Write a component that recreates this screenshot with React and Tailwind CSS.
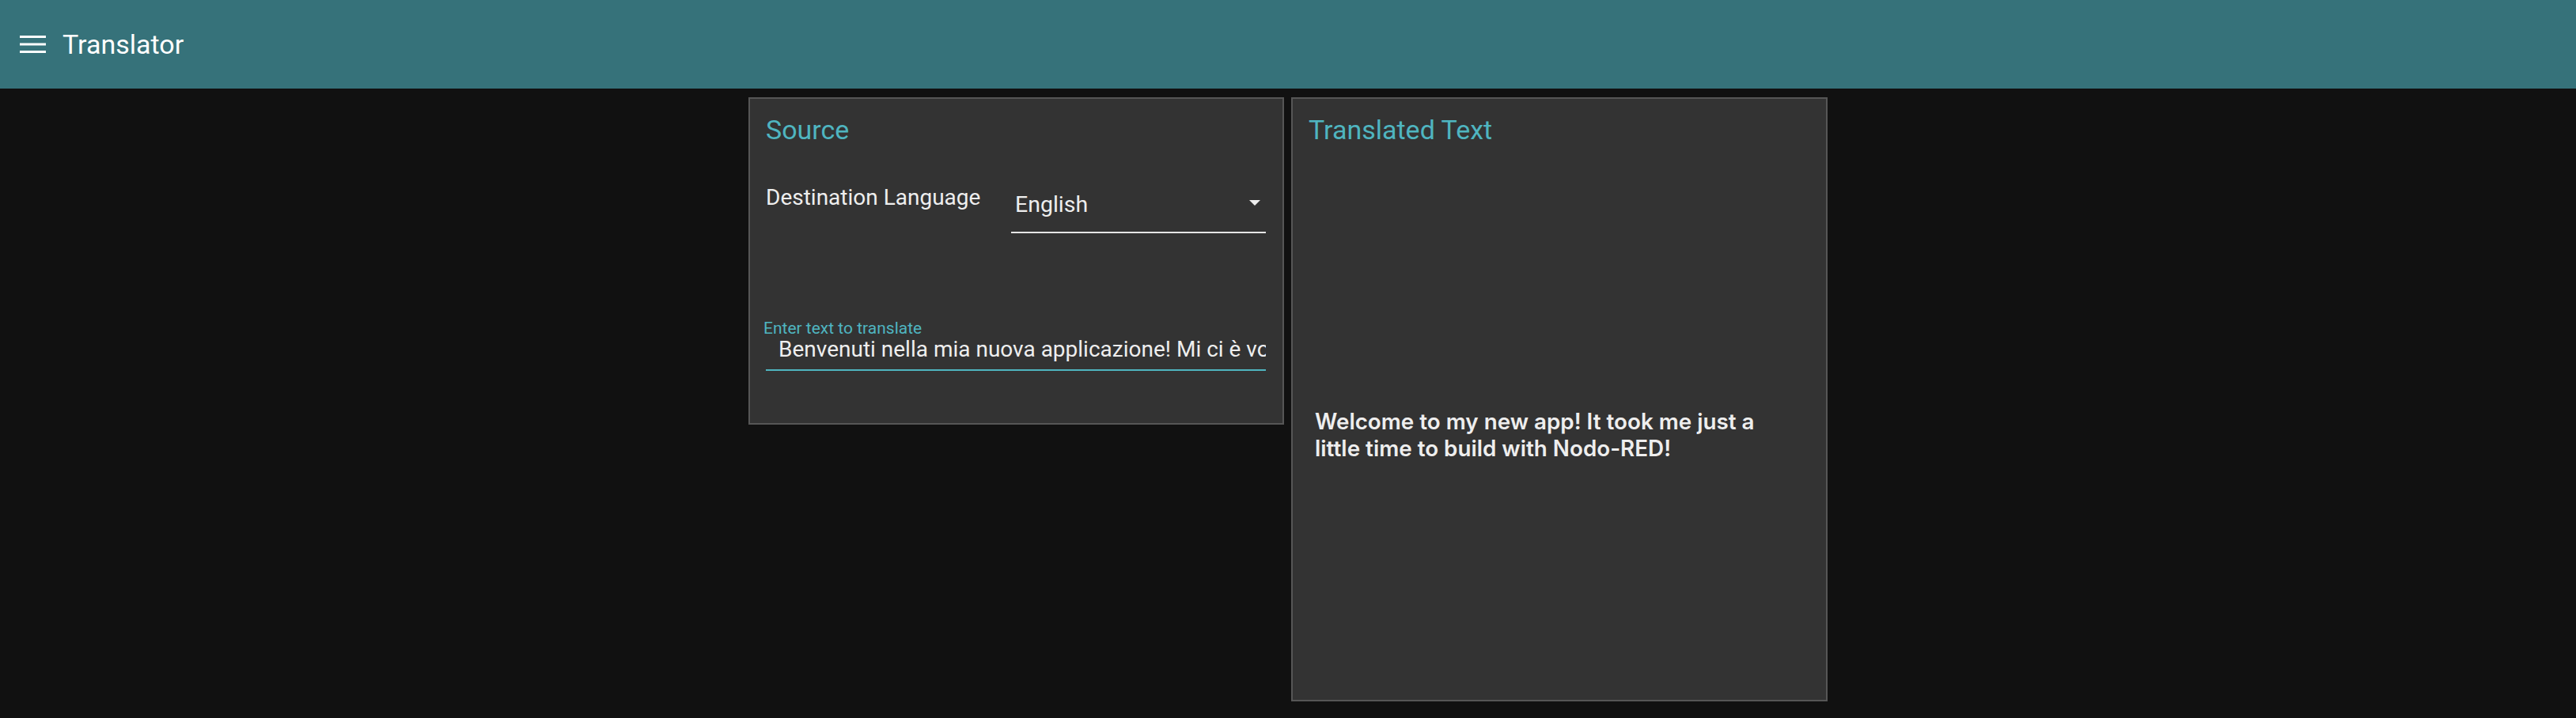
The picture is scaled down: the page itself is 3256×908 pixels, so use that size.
import React from "react";

export default function App() {
  return (
    <div className="min-h-[908px] w-full bg-[#111111]" style={{ fontFamily: "Roboto, 'Liberation Sans', sans-serif" }}>
      <header className="flex h-[112px] items-center bg-[#36727a] pl-[25px]">
        <svg width="33" height="22" viewBox="0 0 33 22" className="mt-[-1px]">
          <rect x="0" y="0" width="33" height="3" fill="#ffffff" />
          <rect x="0" y="9.5" width="33" height="3" fill="#ffffff" />
          <rect x="0" y="19" width="33" height="3" fill="#ffffff" />
        </svg>
        <span className="ml-[21px] text-[34px] leading-[40px] text-white">Translator</span>
      </header>
      <main className="flex items-start justify-center gap-[9px] pt-[11px]">
        <section className="flex h-[414px] w-[677px] flex-col border-2 border-[#565656] bg-[#333333] pl-[20px] pr-[21px] pt-[19px]">
          <h2 className="text-[34px] font-normal leading-[40px] text-[#4fb5c0]">Source</h2>
          <div className="mt-[49px] flex items-start">
            <div className="flex-1 text-[28px] leading-[34px] text-[#eeeeee]">Destination Language</div>
            <div className="mt-[9px] flex w-[322px] items-start justify-between border-b-2 border-[#e6e6e6] pb-[17px] pl-[5px]">
              <span className="text-[28.5px] leading-[34px] text-[#eeeeee]">English</span>
              <svg width="14" height="8" viewBox="0 0 14 8" className="mr-[7px] mt-[11px]">
                <path d="M0 0 L14 0 L7 7 Z" fill="#eeeeee" />
              </svg>
            </div>
          </div>
          <div className="mt-[108px] flex flex-col">
            <label className="ml-[-3px] text-[21px] leading-[25px] text-[#4fb5c0]">Enter text to translate</label>
            <div className="overflow-hidden whitespace-nowrap border-b-2 border-[#4fb5c0] pb-[11px] pl-[16px] text-[28px] leading-[28px] text-[#eeeeee]">
              Benvenuti nella mia nuova applicazione! Mi ci è voluto poco tempo per costruirla con Nodo-RED!
            </div>
          </div>
        </section>
        <section className="flex h-[764px] w-[678px] flex-col border-2 border-[#565656] bg-[#333333] pl-[20px] pr-[21px] pt-[19px]">
          <h2 className="text-[34px] font-normal leading-[40px] text-[#4fb5c0]">Translated Text</h2>
          <p className="mt-[332px] max-w-[600px] pl-[8px] text-[27.8px] font-semibold leading-[34px] text-[#eeeeee]" style={{ fontFamily: "Inter, Roboto, sans-serif" }}>
            Welcome to my new app! It took me just a little time to build with Nodo-RED!
          </p>
        </section>
      </main>
    </div>
  );
}
